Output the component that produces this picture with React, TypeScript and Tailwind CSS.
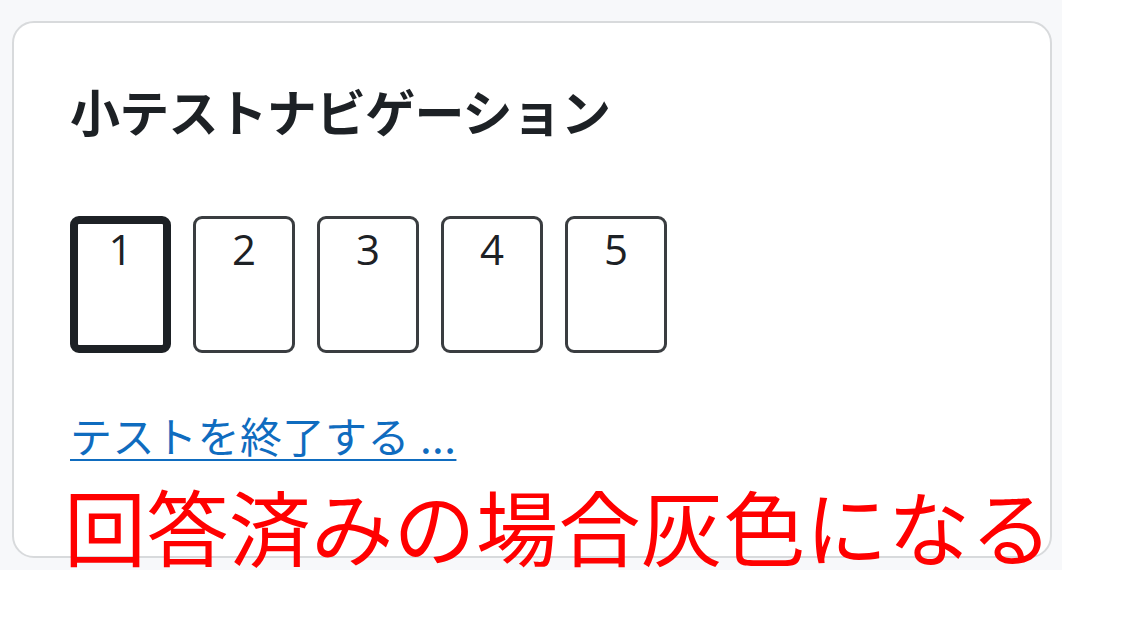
const jp = { fontFamily: '"Noto Sans CJK JP", "Noto Sans", sans-serif' };

const pages = [1, 2, 3, 4, 5];

export default function App() {
  return (
    <div className="relative w-[1121px] h-[628px] bg-white overflow-hidden">
      <div className="w-[1062px] h-[570px] bg-[#f7f8fa] pl-[12px] pt-[21px]">
        <div className="w-[1040px] h-[537px] bg-white border-2 border-[#d8dadc] rounded-[22px] pl-[56px] pt-[56px]">
          <h2
            className="text-[50px] leading-[62px] font-semibold text-[#1d2125] tracking-[-0.8px]"
            style={jp}
          >
            小テストナビゲーション
          </h2>

          {/* page buttons */}
          <div className="flex gap-[22px] mt-[75px]">
            {pages.map((n) => (
              <div
                key={n}
                className={
                  n === 1
                    ? "w-[101px] h-[137px] rounded-[9px] border-[8px] border-[#1d2125] bg-white flex justify-center"
                    : "w-[102px] h-[137px] rounded-[9px] border-[3px] border-[#3a3d40] bg-white flex justify-center"
                }
              >
                <span
                  className={
                    n === 1
                      ? "text-[42px] leading-[60px] text-[#1d2125] mt-[-5px]"
                      : "text-[42px] leading-[60px] text-[#1d2125]"
                  }
                  style={{ fontFamily: '"Open Sans", "Noto Sans", sans-serif' }}
                >
                  {n}
                </span>
              </div>
            ))}
          </div>

          <a
            href="#"
            className="inline-block mt-[56px] text-[42px] leading-[52px] text-[#0f6cbf] underline decoration-2 underline-offset-[6px] tracking-[0.5px]"
            style={jp}
          >
            テストを終了する ...
          </a>
        </div>
      </div>

      {/* annotation overlay */}
      <div
        className="absolute left-[64px] top-[475px] text-[82px] leading-[100px] text-[#ff0000] whitespace-nowrap tracking-[0.4px]"
        style={jp}
      >
        回答済みの場合灰色になる
      </div>
    </div>
  );
}
